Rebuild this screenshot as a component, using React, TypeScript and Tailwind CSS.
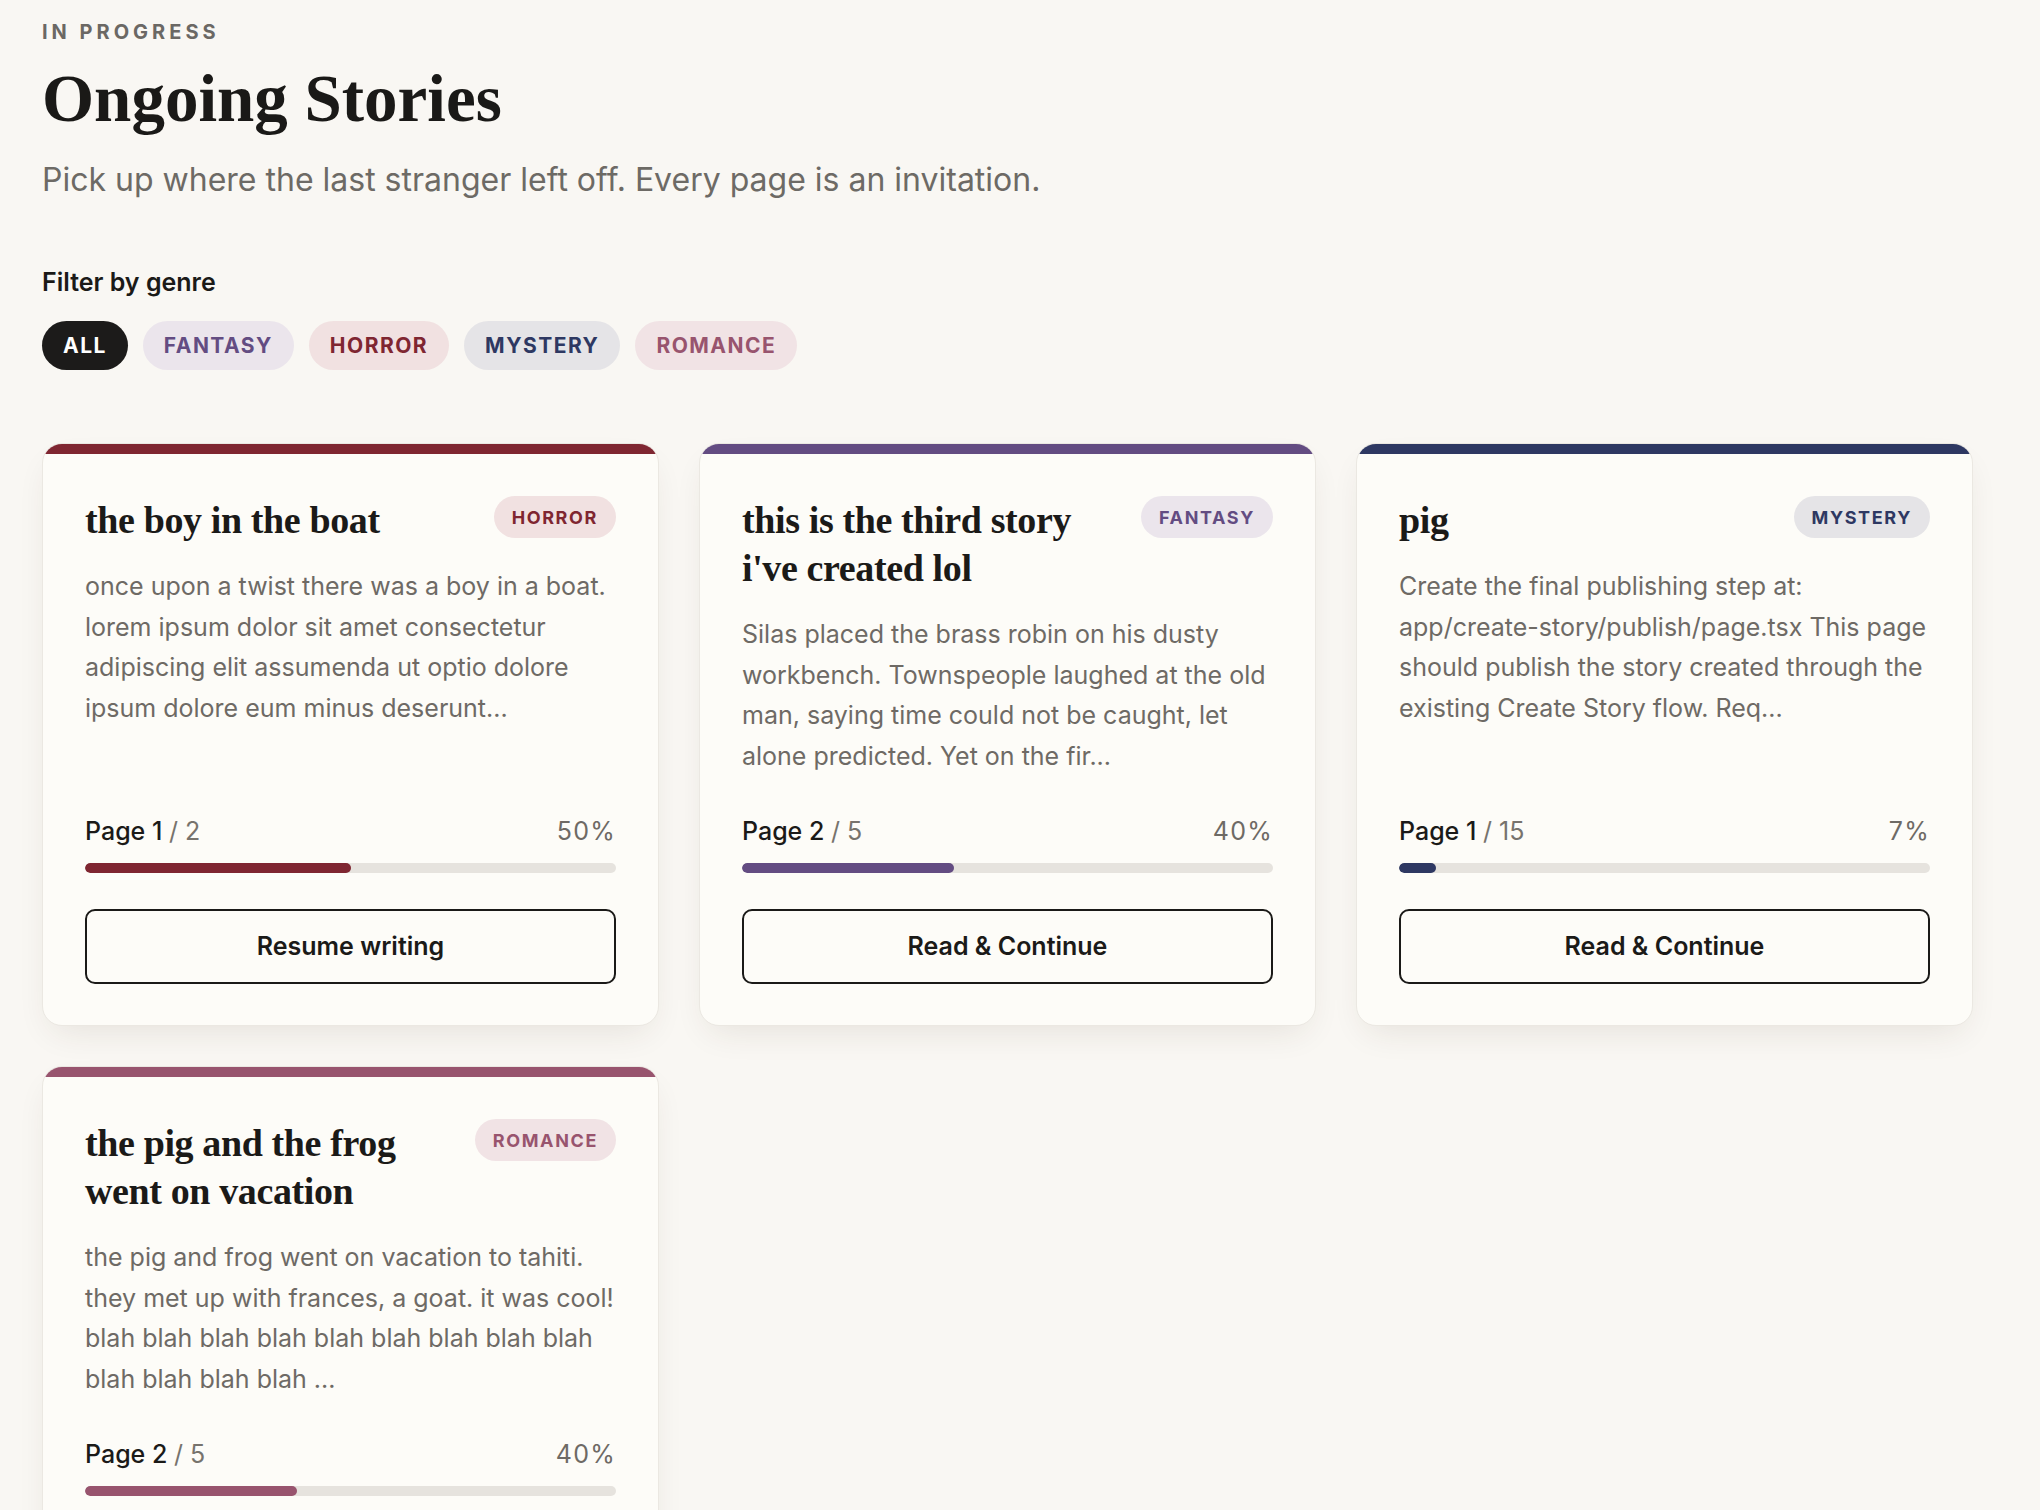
const GENRES = {
  fantasy: { label: "FANTASY", bar: "bg-[#634c82]", chip: "bg-[#ebe5ec] text-[#634c82]" },
  horror: { label: "HORROR", bar: "bg-[#7f2631]", chip: "bg-[#f1e1e1] text-[#7f2631]" },
  mystery: { label: "MYSTERY", bar: "bg-[#2e3862]", chip: "bg-[#e5e4e7] text-[#2e3862]" },
  romance: { label: "ROMANCE", bar: "bg-[#98546e]", chip: "bg-[#f1e3e5] text-[#98546e]" },
};

type GenreKey = keyof typeof GENRES;

const STORIES: {
  title: string;
  genre: GenreKey;
  excerpt: React.ReactNode;
  page: number;
  total: number;
  action: string;
}[] = [
  {
    title: "the boy in the boat",
    genre: "horror",
    excerpt:
      "once upon a twist there was a boy in a boat. lorem ipsum dolor sit amet consectetur adipiscing elit assumenda ut optio dolore ipsum dolore eum minus deserunt...",
    page: 1,
    total: 2,
    action: "Resume writing",
  },
  {
    title: "this is the third story i've created lol",
    genre: "fantasy",
    excerpt:
      "Silas placed the brass robin on his dusty workbench. Townspeople laughed at the old man, saying time could not be caught, let alone predicted. Yet on the fir...",
    page: 2,
    total: 5,
    action: "Read & Continue",
  },
  {
    title: "pig",
    genre: "mystery",
    excerpt: (
      <>
        Create the final publishing step at:{" "}
        <span className="whitespace-nowrap">app/create-story/publish/page.tsx</span> This page should
        publish the story created through the existing Create Story flow. Req...
      </>
    ),
    page: 1,
    total: 15,
    action: "Read & Continue",
  },
  {
    title: "the pig and the frog went on vacation",
    genre: "romance",
    excerpt:
      "the pig and frog went on vacation to tahiti. they met up with frances, a goat. it was cool! blah blah blah blah blah blah blah blah blah blah blah blah blah ...",
    page: 2,
    total: 5,
    action: "Read & Continue",
  },
];

const SERIF = "font-['Liberation_Serif',_'Times_New_Roman',_serif]";

function StoryCard({ story }: { story: (typeof STORIES)[number] }) {
  const genre = GENRES[story.genre];
  const pct = Math.round((story.page / story.total) * 100);

  return (
    <article className="flex flex-col overflow-hidden rounded-[20px] border border-[#ebe8e2] bg-[#fdfcf8] shadow-[0_14px_34px_-10px_rgba(60,45,30,0.11)]">
      {/* genre colour strip */}
      <div className={`h-[10px] ${genre.bar}`} />

      <div className="flex flex-1 flex-col px-[42px] pt-[42px] pb-[41px]">
        <div className="flex items-start justify-between gap-[18px]">
          <h3 className={`${SERIF} text-[38px] font-bold leading-[48px] tracking-[-0.01em] text-[#1b1a18]`}>
            {story.title}
          </h3>
          <span
            className={`flex h-[42px] shrink-0 items-center rounded-full px-[18px] text-[18px] font-bold tracking-[0.09em] ${genre.chip}`}
          >
            {genre.label}
          </span>
        </div>

        <p className="mt-[22px] text-[25px] leading-[40.5px] text-[#6e6a65]">{story.excerpt}</p>

        <div className="mt-auto pt-[39px]">
          <div className="flex items-center justify-between text-[25px] leading-[32px]">
            <p className="font-medium text-[#1b1a18]">
              Page {story.page} <span className="font-normal text-[#77736d]">/ {story.total}</span>
            </p>
            <span className="tracking-[0.05em] text-[#6e6a65]">{pct}%</span>
          </div>

          <div className="mt-4 h-[10px] overflow-hidden rounded-full bg-[#e6e3de]">
            <div className={`h-full rounded-full ${genre.bar}`} style={{ width: `${pct}%` }} />
          </div>

          <button className="mt-9 flex h-[75px] w-full items-center justify-center rounded-[10px] border-[2.5px] border-[#1b1a18] text-[25px] font-semibold text-[#1b1a18]">
            {story.action}
          </button>
        </div>
      </div>
    </article>
  );
}

export default function App() {
  return (
    <div className="min-h-screen bg-[#f9f7f3] px-[42px] pt-[20px] pb-16 font-['Inter',_'Liberation_Sans',_sans-serif] text-[#1b1a18]">
      <header>
        <p className="text-[20px] font-bold leading-[24px] tracking-[0.2em] text-[#6b6864]">IN PROGRESS</p>
        <h1 className={`${SERIF} mt-[17px] text-[67px] font-bold leading-[74px] text-[#1a1917]`}>
          Ongoing Stories
        </h1>
        <p className="mt-[23px] text-[32px] leading-[44px] text-[#6d6a65]">
          Pick up where the last stranger left off. Every page is an invitation.
        </p>
      </header>

      <section className="mt-[65px]">
        <p className="text-[25px] font-semibold leading-[30px] text-[#1b1a18]">Filter by genre</p>
        <div className="mt-[24px] flex gap-[15px]">
          <button className="h-[49px] rounded-full bg-[#1c1b1a] px-[21px] text-[21px] font-bold tracking-[0.07em] text-white">
            ALL
          </button>
          {(Object.keys(GENRES) as GenreKey[]).map((key) => (
            <button
              key={key}
              className={`h-[49px] rounded-full px-[21px] text-[21px] font-bold tracking-[0.07em] ${GENRES[key].chip}`}
            >
              {GENRES[key].label}
            </button>
          ))}
        </div>
      </section>

      <div className="mt-[73px] grid max-w-[1931px] grid-cols-3 gap-10">
        {STORIES.map((story) => (
          <StoryCard key={story.title} story={story} />
        ))}
      </div>
    </div>
  );
}
